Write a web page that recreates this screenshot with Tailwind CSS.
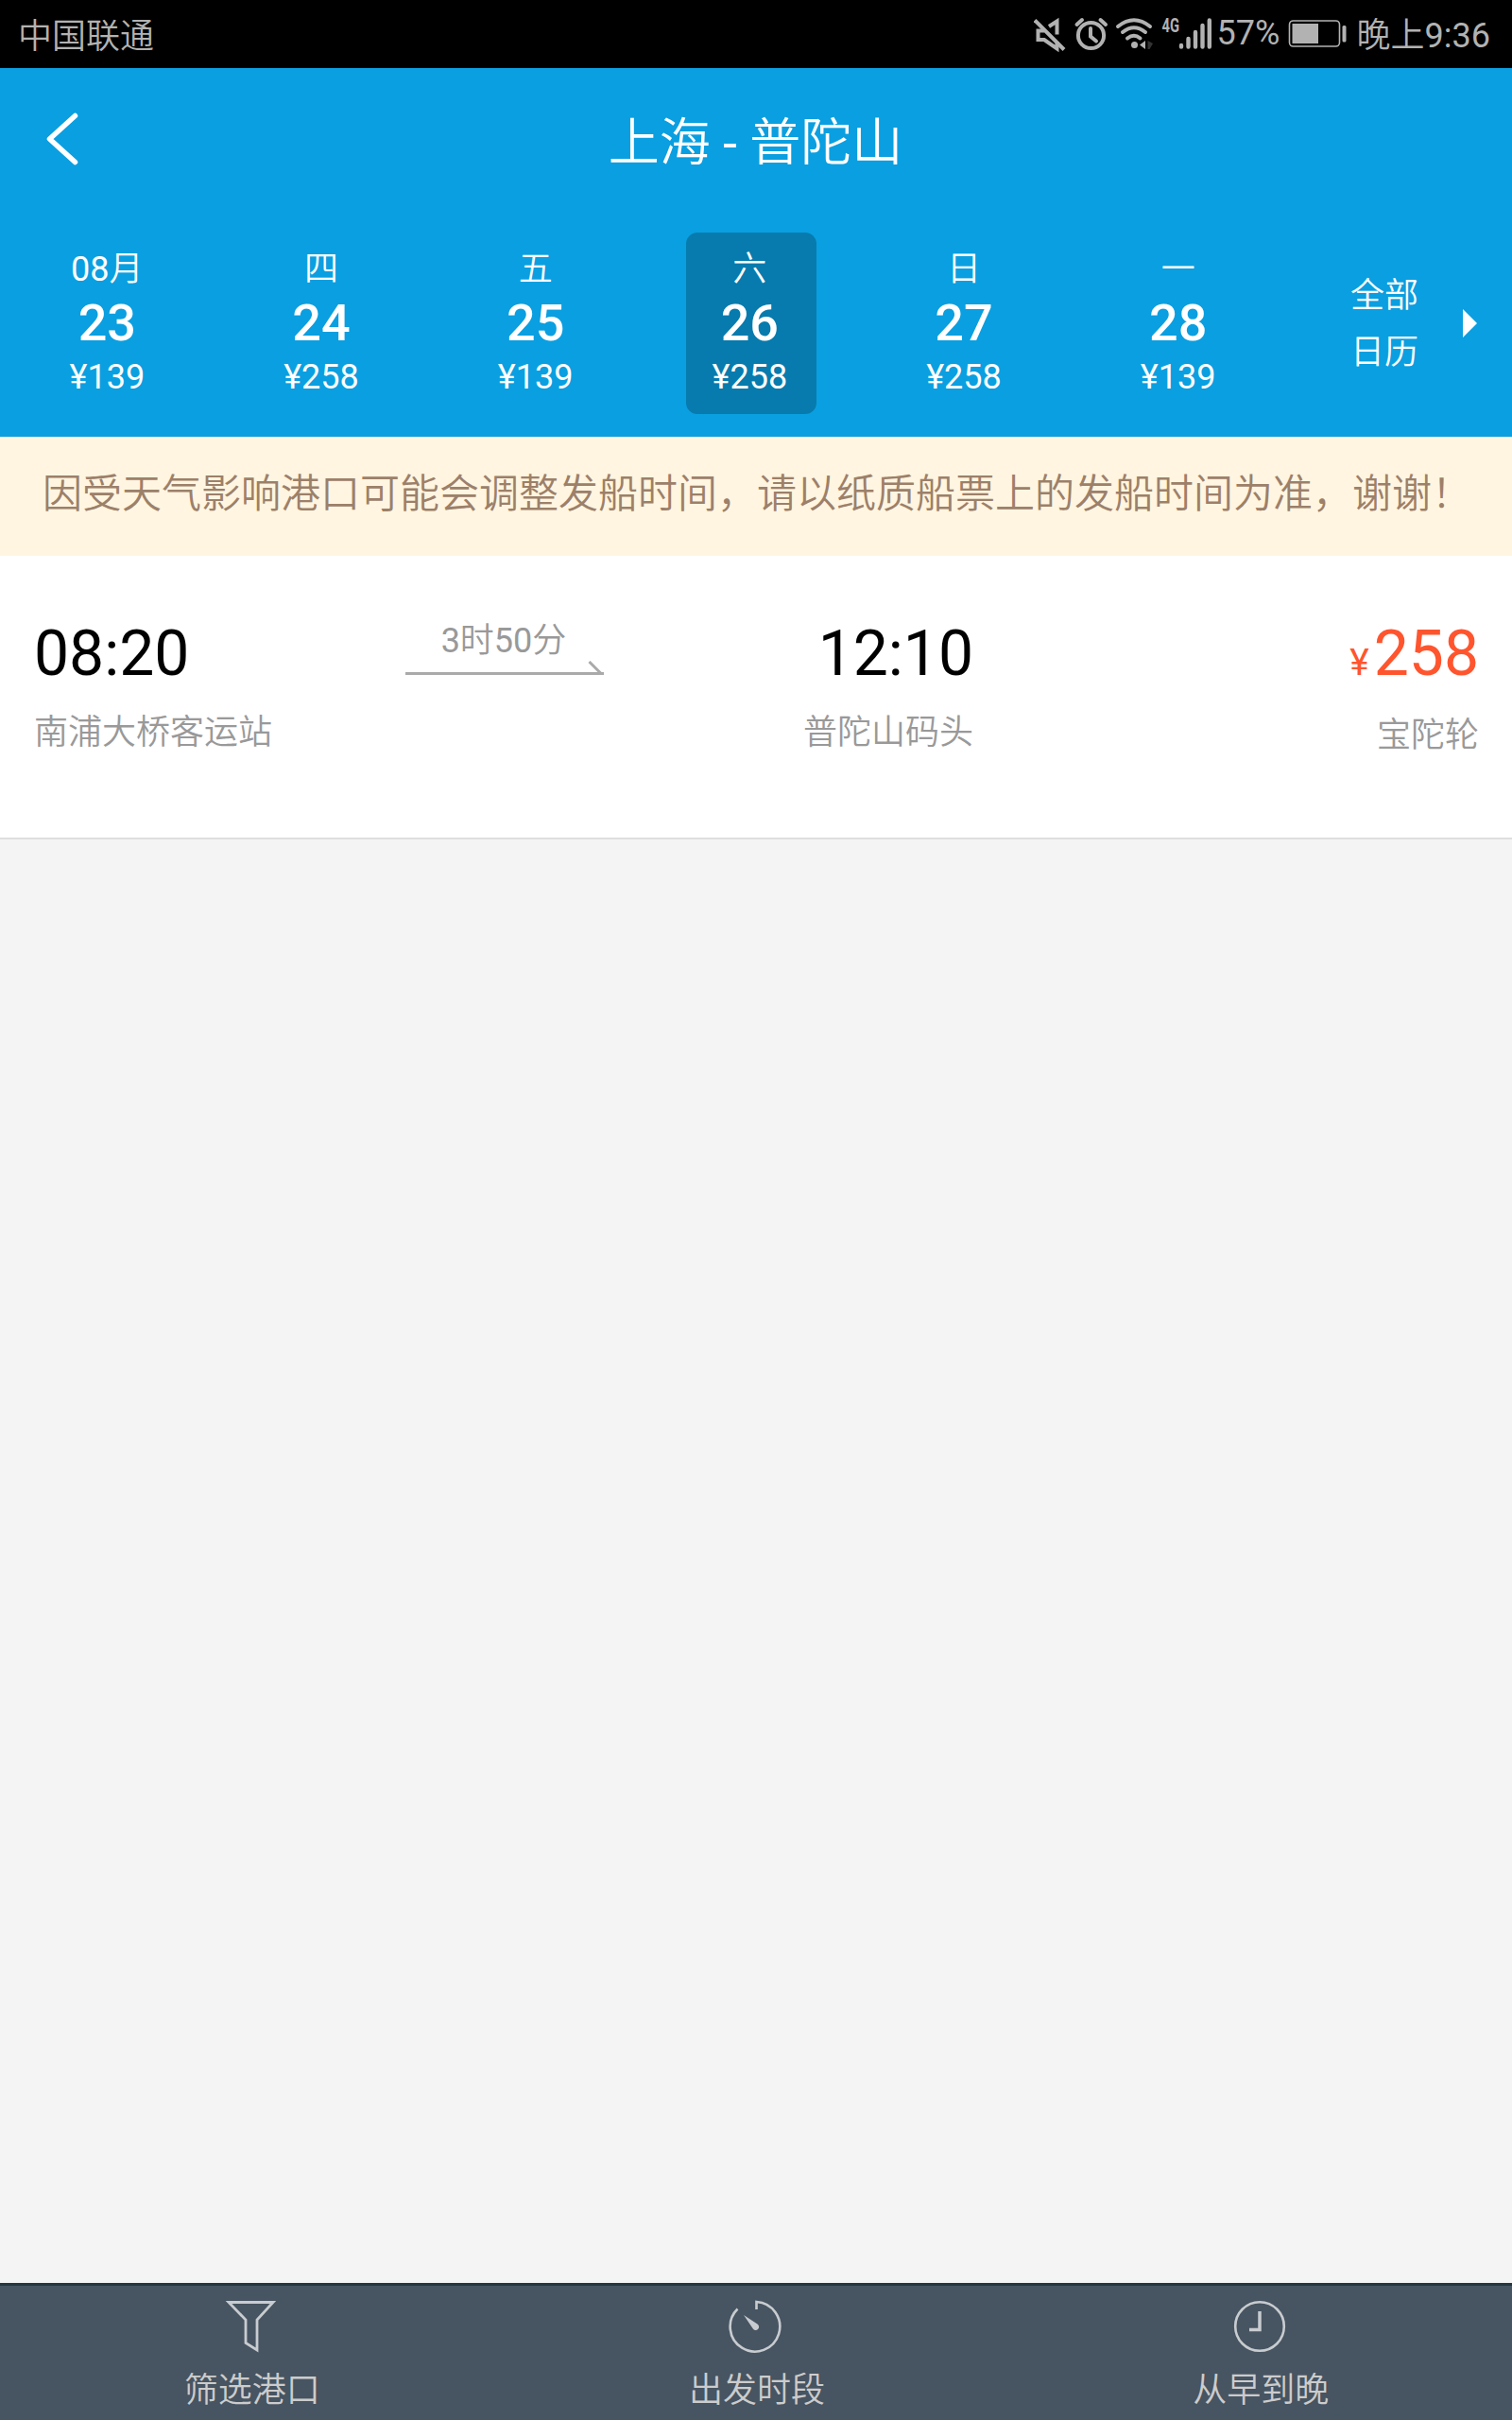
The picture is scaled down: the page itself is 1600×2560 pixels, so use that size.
<!DOCTYPE html>
<html lang="zh-CN">
<head>
  <meta charset="UTF-8">
  <meta name="viewport" content="width=device-width, initial-scale=1.0">
  <title>上海 - 普陀山</title>
  <script src="https://cdn.jsdelivr.net/npm/@tailwindcss/browser@4"></script>
</head>
<body class="w-[1600px] h-[2560px] flex flex-col overflow-hidden bg-[#f4f4f4] text-[36px] leading-none whitespace-nowrap font-['Roboto','Noto_Sans_CJK_SC_DemiLight','Noto_Sans_CJK_SC_Light','Noto_Sans_CJK_SC',sans-serif]">

  <!-- 状态栏 -->
  <div class="h-[72px] shrink-0 bg-black text-[#b2b2b2] flex justify-between pl-[19px] pr-[23px]">
    <span class="leading-[79px]">中国联通</span>
    <div class="flex">
      <svg class="w-[196px] h-[72px]" viewBox="1094 0 196 72" fill="none" stroke="#b2b2b2" stroke-width="4">
        <!-- 静音 -->
        <path d="M1095 21.500L1126 52.500"/>
        <path d="M1105 32.500H1098.500V42H1105L1118.500 51.500V44M1110 28L1118.500 22.500V36.500"/>
        <!-- 闹钟 -->
        <circle cx="1154.500" cy="37.500" r="13.600"/>
        <path d="M1154 30V38.500L1160 43.500" stroke-linecap="round"/>
        <path d="M1139.500 26L1145 21M1170 26L1164.500 21" stroke-linecap="round"/>
        <!-- WiFi -->
        <g stroke-linecap="round">
          <path d="M1183 28Q1200 14.500 1217 28"/>
          <path d="M1188 34Q1200 24.500 1212 34"/>
          <path d="M1193 40.500Q1200 35 1206.500 40.500"/>
        </g>
        <circle cx="1200.500" cy="47.500" r="3.500" fill="#b2b2b2" stroke="none"/>
        <path d="M1212 43V52L1206 47.500Z" fill="#b2b2b2" stroke="none"/>
        <path d="M1214.500 43L1220 46L1216.500 52H1214.500Z" fill="#333" stroke="none"/>
        <text x="1229.500" y="33.500" fill="#b2b2b2" stroke="none" font-size="20" font-weight="700" textLength="18.500" lengthAdjust="spacingAndGlyphs">4G</text>
        <!-- 信号 -->
        <g stroke-width="4.400" stroke-linecap="round">
          <path d="M1250 48V49.500M1257.500 41V49.500M1265 34V49.500M1272.500 27V49.500M1279.800 21.500V49.500"/>
        </g>
      </svg>
      <span class="w-[75px] -ml-[2px] leading-[71px]">57%</span>
      <svg class="w-[74px] h-[72px]" viewBox="1363 0 74 72" fill="none">
        <rect x="1364.500" y="22" width="53" height="27" rx="4" stroke="#b2b2b2" stroke-width="1.600"/>
        <rect x="1367.500" y="25" width="27.500" height="21" fill="#b2b2b2"/>
        <rect x="1420.500" y="27" width="4" height="17.500" rx="1.500" fill="#b2b2b2"/>
      </svg>
      <span class="-ml-[1px] leading-[77px]">晚上9:36</span>
    </div>
  </div>

  <header class="h-[390px] shrink-0 bg-[#0a9fe0] text-white">
    <div class="h-[174px] grid grid-cols-[200px_1fr_200px]">
      <svg class="w-[200px] h-[174px]" viewBox="0 0 200 174" fill="none" stroke="#fff" stroke-width="5.500" stroke-linecap="round" stroke-linejoin="round">
        <path d="M79.500 50.500L52.500 75L79.500 99.500"/>
      </svg>
      <h1 class="text-center text-[54px] leading-[160px] pr-[1px]">上海 - 普陀山</h1>
    </div>
    <div class="h-[192px] flex">
      <div class="w-[1360px] grid grid-cols-6" id="days"></div>
      <div class="flex items-center pl-[69px]">
        <div class="w-[119px] text-[36px] leading-[60px] pt-[1px]">全部<br>日历</div>
        <svg class="w-[15px] h-[30px]" viewBox="0 0 15 30" fill="#fff"><path d="M0 0L15 15L0 30Z"/></svg>
      </div>
    </div>
  </header>

  <div class="h-[126px] shrink-0 bg-[#fff5e0] text-[#9c806a] text-[42px] leading-[122px] pl-[45px]">因受天气影响港口可能会调整发船时间，请以纸质船票上的发船时间为准，谢谢！</div>

  <!-- 班次 -->
  <section class="h-[300px] shrink-0 bg-white border-b-2 border-[#dedede] pl-[36px] pr-[35px] pt-[68px] flex text-[#999]">
    <div class="w-[393px]">
      <div class="text-[66px] leading-[72px] text-black">08:20</div>
      <div class="mt-[11px] leading-[72px]">南浦大桥客运站</div>
    </div>
    <div class="w-[210px] text-center">
      <div class="leading-[44px] pr-[2px]">3时50分</div>
      <svg class="w-[210px] h-[16px] -mt-[1px]" viewBox="0 0 210 16" fill="none" stroke="#aaa" stroke-width="3">
        <path d="M0 13.500H210M194.500 1L207 13.500"/>
      </svg>
    </div>
    <div class="w-[391px] text-right">
      <div class="text-[66px] leading-[72px] text-black">12:10</div>
      <div class="mt-[11px] leading-[72px]">普陀山码头</div>
    </div>
    <div class="flex-1 text-right">
      <div class="h-[72px] text-[66px] leading-[72px] text-[#ff552e]"><span class="text-[39px] leading-none mr-[5px]">¥</span>258</div>
      <div class="mt-[14px] leading-[72px]">宝陀轮</div>
    </div>
  </section>

  <footer class="mt-auto h-[145px] shrink-0 bg-[#475461] border-t-3 border-[#263640] text-[#ccc] grid grid-cols-3 text-center">
    <div class="flex flex-col items-center pt-[15px]">
      <svg class="w-[56px] h-[56px] mr-[1px]" viewBox="0 0 56 56" fill="none" stroke="#c8ccd0" stroke-width="2.800">
        <path d="M4 2.500H51L34 21V53L22 45.500V21Z"/>
      </svg>
      <span class="mt-[17px] leading-[46px]">筛选港口</span>
    </div>
    <div class="flex flex-col items-center pt-[15px]">
      <svg class="w-[56px] h-[56px] mr-[1px]" viewBox="0 0 56 56" fill="none" stroke="#c8ccd0" stroke-width="2.600">
        <path d="M29.500 10V2A26.300 26.300 0 1 1 9.500 9.500"/>
        <path d="M16 16L30.500 25.500A3.500 3.500 0 1 1 25.500 30Z" fill="#c8ccd0" stroke="none"/>
      </svg>
      <span class="mt-[17px] ml-[2px] leading-[46px]">出发时段</span>
    </div>
    <div class="flex flex-col items-center pt-[15px]">
      <svg class="w-[56px] h-[56px]" viewBox="0 0 56 56" fill="none" stroke="#c8ccd0" stroke-width="2.600">
        <circle cx="28" cy="28" r="25.800"/>
        <path d="M28 12V31.500H17" stroke-width="3.500"/>
      </svg>
      <span class="mt-[17px] ml-[2px] leading-[46px]">从早到晚</span>
    </div>
  </footer>

  <script>
    const days = [
      { week: '08月', day: '23', price: 139 },
      { week: '四', day: '24', price: 258 },
      { week: '五', day: '25', price: 139 },
      { week: '六', day: '26', price: 258, active: true },
      { week: '日', day: '27', price: 258 },
      { week: '一', day: '28', price: 139 }
    ];

    document.getElementById('days').innerHTML = days.map(d => `
      <div class="flex justify-center">
        <div class="w-[138px] h-[192px] rounded-[12px] pt-[12px] text-center ${d.active ? 'bg-[#077bad] ml-[3px] pr-[3px]' : ''}">
          <div class="h-[53px] leading-[54px]">${d.week}</div>
          <div class="text-[54px] leading-[62px] font-medium">${d.day}</div>
          <div class="leading-[52px]">¥${d.price}</div>
        </div>
      </div>
    `).join('');
  </script>
</body>
</html>
